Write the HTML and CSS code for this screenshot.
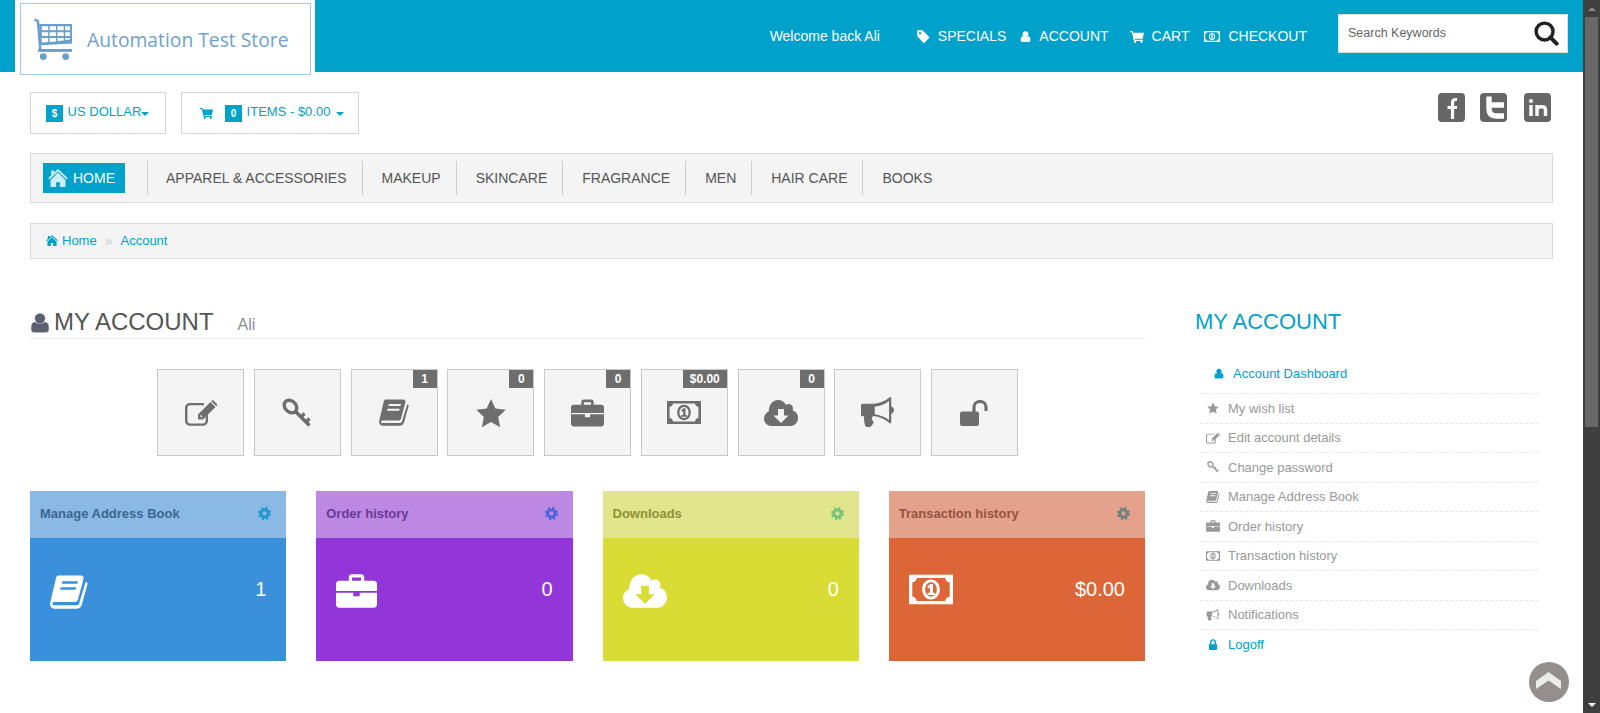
FILE: index.html
```html
<!DOCTYPE html>
<html lang="en">
<head>
  <meta charset="UTF-8" />
  <title>My Account - Automation Test Store</title>
  <link rel="stylesheet" href="styles.css">
</head>
<body>
  <svg class="sprite" xmlns="http://www.w3.org/2000/svg">
    <symbol id="i-user" viewBox="0 0 24 24"><circle cx="12" cy="7" r="6.2"/><path d="M1.5 21v-4c0-3.600 2-5.600 5-5.600 1.300 1.300 3.200 2 5.500 2s4.200-.7 5.500-2c3 0 5 2 5 5.600v4c0 2-1.500 3-3.500 3H5c-2 0-3.500-1-3.500-3z"/></symbol>
    <symbol id="i-tag" viewBox="0 0 24 24"><path fill-rule="evenodd" d="M2 2h9l11 11c1 1 1 2 0 3l-7 7c-1 1-2 1-3 0L2 12zM7 5a2 2 0 1 0 0 4 2 2 0 0 0 0-4z"/></symbol>
    <symbol id="i-cart" viewBox="0 0 26 24"><path d="M0 2h5l1 3h20l-2.500 11H9l.4 2H24v2.200H7.400L3.400 4.200H0z"/><circle cx="9.500" cy="22" r="2"/><circle cx="21.500" cy="22" r="2"/></symbol>
    <symbol id="i-money" viewBox="0 0 40 27"><path fill-rule="evenodd" d="M0 0h40v27H0zM7 3c0 2-2 4-4 4v13c2 0 4 2 4 4h26c0-2 2-4 4-4V7c-2 0-4-2-4-4zM20 4.500c-4.800 0-8 4-8 9s3.200 9 8 9 8-4 8-9-3.200-9-8-9zM20 7c3 0 5.300 2.800 5.300 6.500S23 20 20 20s-5.300-2.800-5.300-6.500S17 7 20 7zM21.800 8.500h-2.500l-2.800 2.600 1.400 1.500 1.100-1v4.900h-2.200v2h6.600v-2h-1.600z"/></symbol>
    <symbol id="i-edit" viewBox="0 0 32 26"><path d="M5 3h14v2.200H5C3.600 5.200 2.400 6.300 2.400 7.800v13C2.400 22.300 3.600 23.500 5 23.500h13c1.500 0 2.700-1.200 2.700-2.700v-4l2.300-2.300v6.300c0 2.800-2.200 5-5 5H5c-2.800 0-5-2.200-5-5v-13C0 5.200 2.200 3 5 3z"/><path d="M13 19.500v-5L25.500 2l5 5L18 19.500zM15 16l1.500 1.500 1-1-1.500-1.500zM26.700.8c.6-.6 1.400-.6 2 0l3 3c.6.6.6 1.400 0 2l-.4.4-5-5z"/></symbol>
    <symbol id="i-key" viewBox="0 0 30 30"><g fill="none" stroke="currentColor"><ellipse cx="8.500" cy="8.500" rx="7" ry="5.500" stroke-width="3.400" transform="rotate(45 8.500 8.500)"/><path d="M12.500 12.500l15 15" stroke-width="3.600"/><path d="M19 19l3.500-3.500M24 24l3.500-3.500" stroke-width="3.400"/></g></symbol>
    <symbol id="i-book" viewBox="0 0 32 28"><path fill-rule="evenodd" d="M7 0h19c1.800 0 2.600 1.300 2.200 3l-4.600 17c-.4 1.500-1.600 2.500-3.200 2.500H3.500c-.8 0-1.300.6-1.300 1.300 0 .8.600 1.400 1.300 1.400h19c1 0 1.700-.5 2-1.500L30 5.500l1.800 1-5 18c-.5 2-2 3.500-4 3.500H3.500C1.500 28 0 26.200 0 24.200c0-.5.100-1.200.3-1.800L5 2.500C5.400 1 5.800 0 7 0zM10.500 5l-.5 2h13l.5-2zM9 10l-.5 2h13l.5-2z"/></symbol>
    <symbol id="i-star" viewBox="0 0 24 24"><path d="M12 .8l3.500 7.600 8.300 1-6.100 5.700 1.600 8.200L12 19.200l-7.300 4.100 1.600-8.200L.2 9.400l8.300-1z"/></symbol>
    <symbol id="i-case" viewBox="0 0 32 26"><path fill-rule="evenodd" d="M10 2.200C10 1 11 0 12.200 0h7.600C21 0 22 1 22 2.200V5h7.500C31 5 32 6 32 7.500V13H0V7.500C0 6 1 5 2.500 5H10zM12.500 2.500V5h7V2.500zM0 14.300h13.500V17h5v-2.700H32v9.200c0 1.500-1 2.500-2.500 2.500h-27C1 26 0 25 0 23.500z"/></symbol>
    <symbol id="i-cloud" viewBox="0 0 34 26"><path fill-rule="evenodd" d="M14 0c3.800 0 6.800 2 8 5 .8-.6 1.700-.9 2.700-.9 2.400 0 4.300 1.900 4.300 4.300 0 .8-.2 1.500-.6 2.200 3.200.6 5.600 3.300 5.600 7.400 0 4.500-3.500 8-8 8H7.500C3.300 26 0 22.700 0 18.500c0-3.200 1.900-5.900 4.800-7C4.700 5 8.500 0 14 0zM14 9v6.500H9.500L17 23l7.500-7.500H20V9z"/></symbol>
    <symbol id="i-horn" viewBox="0 0 30 28"><path fill-rule="evenodd" d="M26.500 0c.6 0 1 .5 1 1v7.500c1.400.4 2.500 1.700 2.500 3.300s-1.100 2.900-2.500 3.300V23c0 .5-.4 1-1 1-5-4.200-10-6.300-15-6.800-1.400.5-2 2-1.400 3.300.5 1 1.500 1.800 1.400 2.600 0 .6-.5 1.300-2.700 3.800-2.500.7-4.700.4-5-1-.8-2.800-1.200-5-1-8.500H1.500C.7 17.400 0 16.700 0 16V7.500C0 6.700.7 6 1.500 6H11c5 0 10.500-2 15.500-6zM25.500 3.500c-3.700 3-8.500 4.700-13 5.300v6.700c4.500.5 9.300 2.300 13 5.300z"/></symbol>
    <symbol id="i-unlock" viewBox="0 0 30 26"><path d="M0 13.500C0 12.500 1 11.500 2 11.500h15c1 0 2 1 2 2V24c0 1-1 2-2 2H2c-1 0-2-1-2-2z"/><path d="M14 12V7c0-3 2.500-5.500 6-5.500s6 2.500 6 5.500v4" fill="none" stroke="currentColor" stroke-width="3.200"/></symbol>
    <symbol id="i-lock" viewBox="0 0 20 24"><path d="M1 11.500h18V22c0 1-1 2-2 2H3c-1 0-2-1-2-2z"/><path d="M5 12V7.500C5 4.500 7 2 10 2s5 2.500 5 5.500V12" fill="none" stroke="currentColor" stroke-width="3"/></symbol>
    <symbol id="i-gear" viewBox="0 0 24 24"><circle cx="12" cy="12" r="6.500" fill="none" stroke="currentColor" stroke-width="5"/><circle cx="12" cy="12" r="10" fill="none" stroke="currentColor" stroke-width="4" stroke-dasharray="4.500 3.354"/></symbol>
    <symbol id="i-home" viewBox="0 0 26 24"><path d="M13 0l13 12-1.500 1.900L13 3.300 1.500 13.900 0 12l4-3.600V2h4v2.800z"/><path d="M3 14.500L13 5l10 9.500V24h-7.500v-6.500h-5V24H3z"/></symbol>
    <symbol id="i-search" viewBox="0 0 26 26"><circle cx="11" cy="11" r="8.800" fill="none" stroke="currentColor" stroke-width="3.600"/><path d="M17 17l6.500 6.500" fill="none" stroke="currentColor" stroke-width="4.200" stroke-linecap="round"/></symbol>
    <symbol id="i-carts" viewBox="0 0 40 44"><path d="M.5 1.500L4 3l2.500 30H39" fill="none" stroke="currentColor" stroke-width="2.500"/><path fill-rule="evenodd" d="M5 6h34v20L7 28zM8 8.500v4h6.500v-4zM16 8.500v4h6.500v-4zM24 8.500v4h6.500v-4zM32 8.500v4h5v-4zM8 14.500v4h6.500v-4zM16 14.500v4h6.500v-4zM24 14.500v4h6.500v-4zM32 14.500v4h5v-4zM8 20.500v4.500l6.500-.5v-4zM16 20.500v4l6.500-.5v-3.500zM24 20.500v3l6.500-.5v-2.500zM32 20.500v2l5-.5v-1.500z"/><path d="M4 32h35v2.500H4z"/><circle cx="9.500" cy="39.500" r="3.500"/><circle cx="32.500" cy="39.500" r="3.500"/></symbol>
  </svg>

  <div class="page">
    <header class="top">
      <div class="logo-wrap">
        <a class="logo">
          <svg class="logo-cart"><use href="#i-carts"/></svg>
          <span>Automation Test Store</span>
        </a>
      </div>
      <div class="top-right">
        <span class="welcome">Welcome back Ali</span>
        <a class="top-link"><svg class="ic-tag"><use href="#i-tag"/></svg>SPECIALS</a>
        <a class="top-link top-link-wide"><svg class="ic-user"><use href="#i-user"/></svg>ACCOUNT</a>
        <a class="top-link top-link-cart"><svg class="ic-cart"><use href="#i-cart"/></svg>CART</a>
        <a class="top-link"><svg class="ic-money"><use href="#i-money"/></svg>CHECKOUT</a>
        <div class="search">
          <span>Search Keywords</span>
          <svg><use href="#i-search"/></svg>
        </div>
      </div>
    </header>

    <div class="container">
      <div class="toolbar">
        <div class="drop drop-currency"><b class="chip">$</b><span class="drop-text"> US DOLLAR</span><i class="caret"></i></div>
        <div class="drop drop-items">
          <svg class="drop-cart"><use href="#i-cart"/></svg>
          <b class="chip">0</b><span class="drop-text"> ITEMS - $0.00 </span><i class="caret caret-gap"></i>
        </div>
        <div class="social">
          <svg viewBox="0 0 27 29"><rect width="27" height="29" rx="4"/><path d="M19 6.500h-1.500c-2 0-3 1.200-3 3.300V26M9.500 14.500H19" fill="none" stroke="#fff" stroke-width="3.200"/></svg>
          <svg viewBox="0 0 27 29"><rect width="27" height="29" rx="4"/><path d="M9 3.500v12c0 5 2.500 7.500 7 7.500h8M9 12h15" fill="none" stroke="#fff" stroke-width="5.400"/></svg>
          <svg viewBox="0 0 27 29"><rect width="27" height="29" rx="4"/><path d="M7 12v11M13 23V12M13 16c1-2.500 8-3.800 8.500.5V23" fill="none" stroke="#fff" stroke-width="3.400"/><circle cx="7" cy="8" r="2.100" fill="#fff"/></svg>
        </div>
      </div>

      <nav class="menu">
        <a class="menu-home"><svg><use href="#i-home"/></svg>HOME</a>
        <a class="menu-first">APPAREL &amp; ACCESSORIES</a>
        <a>MAKEUP</a>
        <a>SKINCARE</a>
        <a>FRAGRANCE</a>
        <a>MEN</a>
        <a>HAIR CARE</a>
        <a>BOOKS</a>
      </nav>

      <div class="crumb">
        <svg><use href="#i-home"/></svg>
        <a>Home</a>
        <span class="crumb-sep">&raquo;</span>
        <a>Account</a>
      </div>

      <div class="content">
        <main class="main">
          <h1 class="title"><svg><use href="#i-user"/></svg>MY ACCOUNT<small>Ali</small></h1>

          <div class="tiles">
            <a class="tile"><svg class="t-edit"><use href="#i-edit"/></svg></a>
            <a class="tile"><svg class="t-key"><use href="#i-key"/></svg></a>
            <a class="tile"><span class="badge">1</span><svg class="t-book"><use href="#i-book"/></svg></a>
            <a class="tile"><span class="badge">0</span><svg class="t-star"><use href="#i-star"/></svg></a>
            <a class="tile"><span class="badge">0</span><svg class="t-case"><use href="#i-case"/></svg></a>
            <a class="tile"><span class="badge">$0.00</span><svg class="t-money"><use href="#i-money"/></svg></a>
            <a class="tile"><span class="badge">0</span><svg class="t-cloud"><use href="#i-cloud"/></svg></a>
            <a class="tile"><svg class="t-horn"><use href="#i-horn"/></svg></a>
            <a class="tile"><svg class="t-unlock"><use href="#i-unlock"/></svg></a>
          </div>

          <div class="cards">
            <section class="card card-blue">
              <div class="card-head"><span>Manage Address Book</span><svg><use href="#i-gear"/></svg></div>
              <div class="card-body"><svg class="c-book"><use href="#i-book"/></svg><span>1</span></div>
            </section>
            <section class="card card-purple">
              <div class="card-head"><span>Order history</span><svg><use href="#i-gear"/></svg></div>
              <div class="card-body"><svg class="c-case"><use href="#i-case"/></svg><span>0</span></div>
            </section>
            <section class="card card-yellow">
              <div class="card-head"><span>Downloads</span><svg><use href="#i-gear"/></svg></div>
              <div class="card-body"><svg class="c-cloud"><use href="#i-cloud"/></svg><span>0</span></div>
            </section>
            <section class="card card-orange">
              <div class="card-head"><span>Transaction history</span><svg><use href="#i-gear"/></svg></div>
              <div class="card-body"><svg class="c-money"><use href="#i-money"/></svg><span>$0.00</span></div>
            </section>
          </div>
        </main>

        <aside class="side">
          <h2>MY ACCOUNT</h2>
          <ul class="side-list">
            <li class="active first"><svg class="s-user"><use href="#i-user"/></svg>Account Dashboard</li>
            <li><svg><use href="#i-star"/></svg>My wish list</li>
            <li><svg><use href="#i-edit"/></svg>Edit account details</li>
            <li><svg><use href="#i-key"/></svg>Change password</li>
            <li><svg><use href="#i-book"/></svg>Manage Address Book</li>
            <li><svg><use href="#i-case"/></svg>Order history</li>
            <li><svg><use href="#i-money"/></svg>Transaction history</li>
            <li><svg><use href="#i-cloud"/></svg>Downloads</li>
            <li><svg><use href="#i-horn"/></svg>Notifications</li>
            <li class="active"><svg class="s-lock"><use href="#i-lock"/></svg>Logoff</li>
          </ul>
        </aside>
      </div>
    </div>

    <a class="to-top">
      <svg viewBox="0 0 40 40"><path d="M7 27v-8l12.500-9L32 19v8l-12.500-8.500z" fill="#ececea"/></svg>
    </a>
  </div>

  <div class="scrollbar">
    <i class="arrow-up"></i>
    <div class="thumb"></div>
    <i class="arrow-down"></i>
  </div>
</body>
</html>
```

FILE: styles.css
```css
* {
  box-sizing: border-box;
}
html, body {
  height: 713px;
  overflow: hidden;
}
body {
  margin: 0;
  display: flex;
  background: #fff;
  font-family: "Liberation Sans", Arial, sans-serif;
  font-size: 14px;
  color: #555;
}
svg {
  fill: currentColor;
  display: block;
}
.sprite {
  width: 0;
  height: 0;
  position: absolute;
}
.page {
  flex: 1;
  min-width: 0;
  position: relative;
}

/* top bar */
.top {
  height: 72px;
  background: #00a1cb;
  display: flex;
  justify-content: space-between;
  color: #fff;
}
.logo-wrap {
  width: 300px;
  margin-left: 15px;
  padding: 3px 4px 0 5px;
  background: #fff;
}
.logo {
  height: 72px;
  background: #fff;
  border: 1px solid #a3c7e6;
  display: flex;
  align-items: center;
  position: relative;
  padding-left: 13px;
  color: #6da2cd;
  font-family: "Open Sans", sans-serif;
  font-size: 19.300px;
}
.logo-cart {
  width: 39px;
  height: 43px;
  margin-right: 14px;
  color: #6a9fcb;
}
.top-right {
  display: flex;
  align-items: center;
  padding-right: 15px;
}
.welcome {
  margin-right: 36px;
}
.top-link {
  display: flex;
  align-items: center;
  margin-right: 14px;
}
.top-link-wide {
  margin-right: 21px;
}
.top-link-cart {
  margin-right: 15px;
}
.top-link svg {
  margin-right: 8px;
}
.ic-tag {
  width: 14px;
  height: 14px;
}
.ic-user {
  width: 11px;
  height: 13px;
}
.ic-cart {
  width: 14px;
  height: 13px;
}
.ic-money {
  width: 16px;
  height: 11px;
}
.search {
  width: 230px;
  height: 39px;
  margin: 0 0 5px 17px;
  background: #fff;
  border: 1px solid #ddd;
  display: flex;
  align-items: center;
  justify-content: space-between;
  padding: 0 8px 0 9px;
  font-size: 12.500px;
  color: #666;
}
.search span {
  padding-bottom: 1px;
}
.search svg {
  width: 25px;
  height: 25px;
  color: #222;
}

.container {
  padding: 0 30px;
}

/* currency and cart row */
.toolbar {
  margin-top: 20px;
  height: 42px;
  display: flex;
  color: #00a1cb;
}
.drop {
  height: 42px;
  border: 1px solid #d5d5d5;
  display: flex;
  align-items: center;
  margin-right: 15px;
  white-space: pre;
  font-size: 13px;
}
.drop-text {
  padding-bottom: 3px;
}
.drop-currency {
  width: 136px;
  padding-left: 15px;
}
.drop-items {
  width: 178px;
  padding-left: 18px;
}
.drop-cart {
  width: 13px;
  height: 12px;
  margin-right: 12px;
}
.chip {
  width: 17px;
  height: 17px;
  background: #00a1cb;
  color: #fff;
  font-size: 10px;
  line-height: 17px;
  text-align: center;
  margin-right: 1px;
}
.caret {
  width: 0;
  height: 0;
  border: 4px solid transparent;
  border-top-color: #00a1cb;
  border-bottom: 0;
  margin-top: 2px;
}
.caret-gap {
  margin-left: 2px;
}
.social {
  margin-left: auto;
  display: flex;
  gap: 15px;
  padding: 1px 2px 0 0;
  color: #666;
}
.social svg {
  width: 27px;
  height: 29px;
}
.social svg + svg + svg {
  margin-left: 2px;
}

/* main menu */
.menu {
  margin-top: 19px;
  height: 50px;
  background: #f4f4f4;
  border: 1px solid #d9d9d9;
  display: flex;
  align-items: center;
  padding-left: 12px;
  color: #555;
}
.menu a {
  height: 34px;
  line-height: 34px;
  padding: 0 15px 0 19px;
  border-right: 1px solid #ccc;
}
.menu .menu-first {
  padding-left: 18px;
}
.menu a:last-child {
  border-right: 0;
}
.menu .menu-home {
  height: 30px;
  line-height: 30px;
  padding: 0 10px 0 5px;
  margin-right: 23px;
  background: #00a1cb;
  color: #fff;
  border: 0;
  display: flex;
  align-items: center;
  position: relative;
}
.menu-home svg {
  width: 20px;
  height: 18px;
  margin-right: 5px;
  color: #cdeefa;
}
.menu-home::after {
  content: "";
  position: absolute;
  right: -23px;
  top: -2px;
  height: 34px;
  border-right: 1px solid #ccc;
}

/* breadcrumb */
.crumb {
  margin-top: 20px;
  height: 36px;
  padding: 0 0 1px 15px;
  background: #f4f4f4;
  border: 1px solid #d9d9d9;
  display: flex;
  align-items: center;
  font-size: 13px;
  color: #00a1cb;
}
.crumb svg {
  width: 12px;
  height: 11px;
  margin-right: 4px;
}
.crumb-sep {
  color: #ccc;
  margin: 0 8px;
  font-size: 14px;
}

.content {
  display: flex;
  margin-top: 45px;
}
.main {
  width: 1115px;
}

/* page heading */
.title {
  margin: 0;
  height: 35px;
  padding-top: 2px;
  border-bottom: 1px solid #eee;
  display: flex;
  align-items: baseline;
  font-size: 24px;
  font-weight: normal;
  line-height: 32px;
  color: #555;
}
.title svg {
  width: 20px;
  height: 21px;
  margin-right: 4px;
  align-self: center;
  color: #5c6170;
}
.title small {
  font-size: 16px;
  color: #8f8f9a;
  margin-left: 24px;
}

/* icon tiles */
.tiles {
  margin-top: 30px;
  display: flex;
  justify-content: center;
  gap: 9.750px;
}
.tile {
  width: 87px;
  height: 87px;
  background: #f4f4f4;
  border: 1px solid #c9c9c9;
  display: flex;
  align-items: center;
  justify-content: center;
  position: relative;
  color: #6e6e6e;
}
.badge {
  position: absolute;
  top: 0;
  right: 0;
  min-width: 24px;
  height: 18px;
  padding: 0 7px;
  background: #6e6e6e;
  color: #fff;
  font-size: 12px;
  font-weight: bold;
  line-height: 18px;
  text-align: center;
}
.t-edit {
  width: 32px;
  height: 26px;
}
.t-key {
  width: 30px;
  height: 30px;
}
.t-book {
  width: 30px;
  height: 27px;
}
.t-star {
  width: 30px;
  height: 30px;
}
.t-case {
  width: 33px;
  height: 28px;
}
.t-money {
  width: 34px;
  height: 23px;
}
.t-cloud {
  width: 34px;
  height: 26px;
}
.t-horn {
  width: 33px;
  height: 31px;
}
.t-unlock {
  width: 30px;
  height: 26px;
}

/* summary cards */
.cards {
  margin-top: 35px;
  display: grid;
  grid-template-columns: repeat(4, 1fr);
  gap: 30px;
}
.card-head {
  height: 47px;
  display: flex;
  align-items: center;
  justify-content: space-between;
  padding: 0 15px 2px 10px;
  font-size: 13px;
  font-weight: bold;
}
.card-head svg {
  width: 13px;
  height: 13px;
}
.card-body {
  height: 123px;
  display: flex;
  justify-content: space-between;
  padding: 36px 20px 0 20px;
  color: #fff;
  font-size: 20px;
}
.card-body span {
  line-height: 30px;
}
.c-book {
  width: 38px;
  height: 36px;
}
.c-case {
  width: 41px;
  height: 34px;
}
.c-cloud {
  width: 44px;
  height: 34px;
}
.c-money {
  width: 44px;
  height: 31px;
}
.card-blue .card-head {
  background: #8bb9e5;
  color: #3a6690;
}
.card-blue .card-head svg {
  color: #1c98cf;
}
.card-blue .card-body {
  background: #3b90dc;
}
.card-purple .card-head {
  background: #bc88e4;
  color: #693a94;
}
.card-purple .card-head svg {
  color: #4f63d9;
}
.card-purple .card-body {
  background: #9236d9;
}
.card-yellow .card-head {
  background: #e1e58b;
  color: #8e9235;
}
.card-yellow .card-head svg {
  color: #6fc481;
}
.card-yellow .card-body {
  background: #d9dc35;
}
.card-orange .card-head {
  background: #e4a28c;
  color: #93523f;
}
.card-orange .card-head svg {
  color: #6f8081;
}
.card-orange .card-body {
  background: #dc6637;
}

/* sidebar */
.side {
  margin-left: 50px;
  width: 358px;
}
.side h2 {
  margin: 0;
  height: 32px;
  padding-top: 2px;
  font-size: 22px;
  font-weight: normal;
  line-height: 32px;
  color: #00a1cb;
}
.side-list {
  list-style: none;
  margin: 20px 0 0 5px;
  padding: 0;
  width: 338px;
  font-size: 13px;
  color: #999;
}
.side-list li {
  height: 29.500px;
  display: flex;
  align-items: center;
  padding-left: 6px;
  border-bottom: 1px dashed #e6e6e6;
}
.side-list li:last-child {
  border-bottom: 0;
}
.side-list svg {
  width: 14px;
  height: 12px;
  margin-right: 8px;
  color: #999;
}
.side-list .active {
  color: #00a1cb;
}
.side-list .active svg {
  color: #00a1cb;
}
.side-list .first {
  height: 38px;
  padding: 0 0 2px 14px;
}
.side-list .first svg {
  margin-right: 9px;
}
.side-list .s-user {
  width: 10px;
  height: 11px;
}
.side-list .s-lock {
  width: 10px;
  height: 11px;
  margin: 0 10px 0 2px;
}

/* floating back to top button */
.to-top {
  position: absolute;
  left: 1529px;
  top: 662px;
  width: 40px;
  height: 40px;
  border-radius: 50%;
  background: #948f8c;
}

/* window scrollbar */
.scrollbar {
  width: 17px;
  background: #3f3f3f;
  position: relative;
  flex: none;
}
.thumb {
  position: absolute;
  top: 17px;
  left: 2px;
  width: 13px;
  height: 410px;
  background: #686868;
}
.arrow-up, .arrow-down {
  position: absolute;
  left: 5px;
  border: 4px solid transparent;
  width: 0;
  height: 0;
}
.arrow-up {
  top: 3px;
  border-bottom-color: #8a8a8a;
}
.arrow-down {
  bottom: 2px;
  border-top-color: #fff;
}
```
